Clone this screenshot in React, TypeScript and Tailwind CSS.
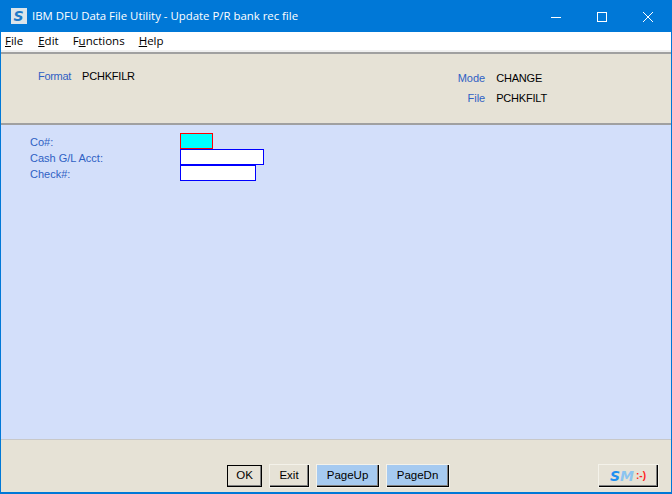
export default function App() {
  const label = "text-[#2f5fc4]";
  const raised = "h-[22px] flex items-center justify-center text-[11.5px] text-black shadow-[inset_-1px_-1px_0_#808080,0_0_0_1px_#f4f2ea] border-r border-b border-r-black border-b-black";
  return (
    <div className="w-[672px] h-[494px] flex flex-col border border-[#0078d7] border-b-2 bg-[#d3dffa] overflow-hidden" style={{ fontFamily: '"Liberation Sans", sans-serif' }}>
      <div className="h-[31px] shrink-0 bg-[#0078d7] flex items-center text-white">
        <svg width="16" height="16" viewBox="0 0 16 16" className="ml-[10px] mt-[-1px]">
          <rect width="16" height="16" fill="#dbe4ea" />
          <text x="7.5" y="13" textAnchor="middle" fontSize="14" fontWeight="bold" fontStyle="italic" fill="#1d78c8" fontFamily="DejaVu Sans">S</text>
        </svg>
        <span className="ml-[5px] text-[11.4px] mt-[-1px]" style={{ fontFamily: '"Open Sans", sans-serif' }}>IBM DFU Data File Utility - Update P/R bank rec file</span>
        <div className="ml-auto flex items-center">
          <svg width="46" height="30" viewBox="0 0 46 30"><path d="M18 15.5H28" stroke="#fff" /></svg>
          <svg width="46" height="30" viewBox="0 0 46 30"><rect x="18.5" y="10.5" width="9" height="9" fill="none" stroke="#fff" /></svg>
          <svg width="46" height="30" viewBox="0 0 46 30"><path d="M18 10L28 20M28 10L18 20" stroke="#fff" /></svg>
        </div>
      </div>
      <div className="h-[18px] shrink-0 bg-white flex items-center pl-[4px] gap-[14px] text-[11.5px] text-black" style={{ fontFamily: '"Open Sans", sans-serif' }}>
        <span><u>F</u>ile</span>
        <span className="ml-[1px]"><u>E</u>dit</span>
        <span>F<u>u</u>nctions</span>
        <span><u>H</u>elp</span>
      </div>
      <div className="h-[2px] shrink-0 bg-[#f0f0f0]" />
      <div className="h-[73px] shrink-0 bg-[#e6e2d6] border-t-2 border-b-2 border-[#a0a0a0] flex justify-between text-[11px] pr-[124px]">
        <div className="flex pl-[37px] pt-[14px] gap-[11px] h-fit">
          <span className={`${label} tracking-[-0.3px]`}>Format</span>
          <span className="text-black tracking-[-0.2px]">PCHKFILR</span>
        </div>
        <div className="grid grid-cols-[auto_auto] gap-x-[11px] gap-y-[6px] pt-[17px] h-fit leading-[14px]">
          <span className={`${label} text-right`}>Mode</span>
          <span className="text-black tracking-[-0.2px]">CHANGE</span>
          <span className={`${label} text-right`}>File</span>
          <span className="text-black tracking-[-0.2px]">PCHKFILT</span>
        </div>
      </div>
      <div className="flex-1 pl-[29px] pt-[8px] text-[11px]">
        <div className="flex h-[16px] items-center">
          <span className={`w-[150px] pt-[2px] ${label}`}>Co#:</span>
          <div className="w-[33px] h-[16px] bg-[#00ffff] border border-[#ff0000]" />
        </div>
        <div className="flex h-[16px] items-center">
          <span className={`w-[150px] pt-[2px] ${label}`}>Cash G/L Acct:</span>
          <div className="w-[84px] h-[16px] bg-white border border-[#0000ff]" />
        </div>
        <div className="flex h-[16px] items-center">
          <span className={`w-[150px] pt-[2px] ${label}`}>Check#:</span>
          <div className="w-[76px] h-[16px] bg-white border border-[#0000ff]" />
        </div>
      </div>
      <div className="h-[53px] shrink-0 bg-[#e6e2d6] border-t border-[#c8c8c8] flex items-end pb-[5px] pl-[226px] pr-[13px]">
        <div className="h-[22px] w-[35px] flex items-center justify-center text-[11.5px] text-black bg-[#e6e2d6] border border-black shadow-[inset_-1px_-1px_0_#808080]">OK</div>
        <div className={`${raised} w-[39px] ml-[8px] bg-[#e6e2d6]`}>Exit</div>
        <div className={`${raised} w-[62px] ml-[8px] bg-[#a6caf0]`}>PageUp</div>
        <div className={`${raised} w-[62px] ml-[8px] bg-[#a6caf0]`}>PageDn</div>
        <div className={`${raised} w-[59px] ml-auto bg-[#e6e2d6] gap-[2px]`}>
          <span className="text-[14px] font-bold italic text-[#1e90f0] leading-none" style={{ fontFamily: '"DejaVu Sans", sans-serif' }}>S<span className="text-[#8cc4f0]">M</span></span>
          <span className="text-[10px] font-bold text-[#ff2020] leading-none">:-)</span>
        </div>
      </div>
    </div>
  );
}
